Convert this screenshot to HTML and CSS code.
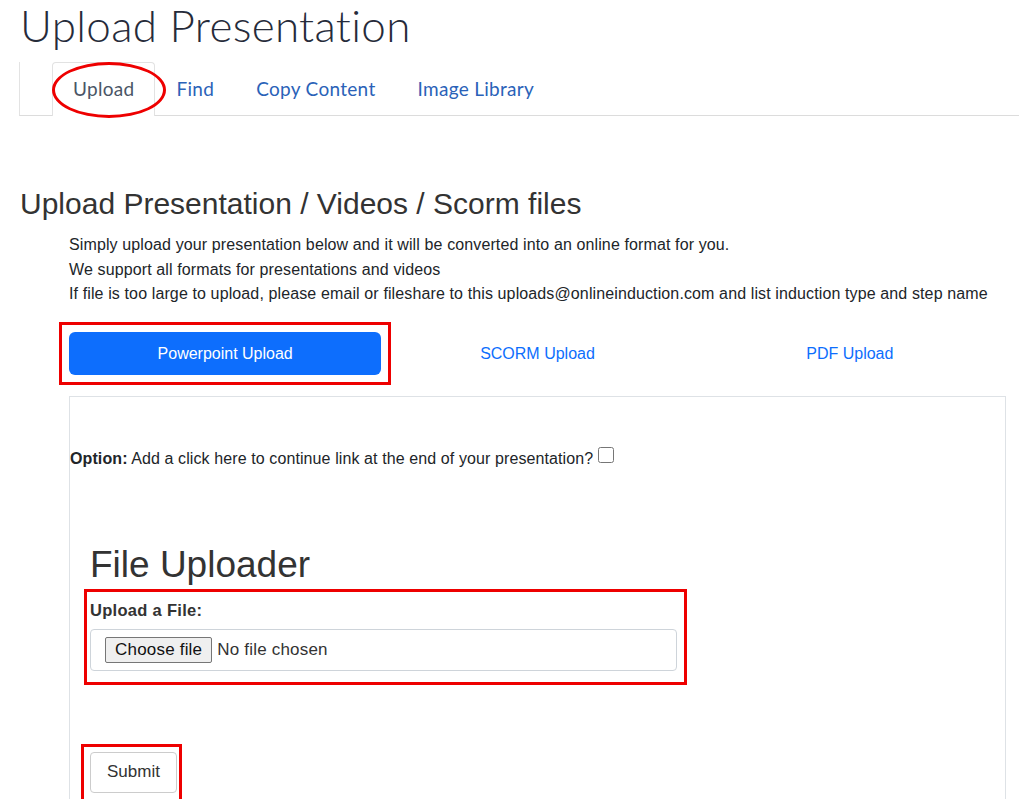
FILE: index.html
```html
<!DOCTYPE html>
<html lang="en">
<head>
  <meta charset="UTF-8" />
  <title>Upload Presentation</title>
  <meta name="viewport" content="width=device-width, initial-scale=1.0"/>
  <link rel="stylesheet" href="styles.css">
</head>
<body>
  <div class="page">
    <h1 class="page-title">Upload Presentation</h1>

    <ul class="nav-tabs">
      <li class="tab active">
        <a href="#">Upload</a>
        <span class="mark-ellipse"></span>
      </li>
      <li class="tab"><a href="#">Find</a></li>
      <li class="tab"><a href="#">Copy Content</a></li>
      <li class="tab"><a href="#">Image Library</a></li>
    </ul>

    <h3 class="section-title">Upload Presentation / Videos / Scorm files</h3>

    <div class="section-body">
      <p class="intro">Simply upload your presentation below and it will be converted into an online format for you.</p>
      <p class="intro">We support all formats for presentations and videos</p>
      <p class="intro">If file is too large to upload, please email or fileshare to this uploads@onlineinduction.com and list induction type and step name</p>

      <div class="pills">
        <div class="pill-wrap">
          <a href="#" class="pill active">Powerpoint Upload</a>
          <span class="mark-rect"></span>
        </div>
        <div class="pill-wrap"><a href="#" class="pill">SCORM Upload</a></div>
        <div class="pill-wrap"><a href="#" class="pill">PDF Upload</a></div>
      </div>

      <div class="upload-box">
        <p class="option"><b>Option:</b> Add a click here to continue link at the end of your presentation? <input type="checkbox" class="option-check"></p>

        <div class="uploader">
          <h1 class="uploader-title">File Uploader</h1>
          <div class="file-group">
            <label for="fileInput">Upload a File:</label>
            <div class="file-field">
              <span class="file-btn">Choose file</span>
              <span class="file-name">No file chosen</span>
            </div>
            <span class="mark-rect"></span>
          </div>

          <div class="submit-wrap">
            <button type="submit" class="submit-btn">Submit</button>
            <span class="mark-rect"></span>
          </div>
        </div>
      </div>
    </div>
  </div>
</body>
</html>
```

FILE: styles.css
```css
:root {
  --link: #2a62b8;
  --primary: #0d6efd;
  --border: #dee2e6;
  --mark: #ee0000;
}

body {
  margin: 0;
  font-family: "Liberation Sans", Arial, sans-serif;
  color: #212529;
  background: #fff;
  overflow: hidden;
}

.page {
  padding: 0 0 0 20px;
}

.page-title {
  margin: 0;
  font-family: Lato, "Open Sans", sans-serif;
  font-weight: 300;
  font-size: 44px;
  line-height: 50px;
  color: #262b3a;
  letter-spacing: 0.3px;
}

/* tabs */
.nav-tabs {
  list-style: none;
  margin: 12px 0 0 -1px;
  padding: 0 0 0 32px;
  display: flex;
  height: 53px;
  border-left: 1px solid #e3e3e3;
  border-bottom: 1px solid #dcdcdc;
}

.tab {
  position: relative;
  display: flex;
  align-items: center;
}

.tab a {
  display: block;
  padding: 0 20px;
  height: 53px;
  line-height: 51px;
  font-family: Lato, "Open Sans", sans-serif;
  font-size: 19px;
  letter-spacing: 0.3px;
  color: var(--link);
  text-decoration: none;
  border: 1px solid transparent;
  border-bottom: none;
  border-radius: 4px 4px 0 0;
  box-sizing: border-box;
}

.tab.active a {
  color: #4a5566;
  border-color: #e2e2e2;
  background: #fff;
  height: 54px;
  margin-bottom: -1px;
}

.mark-ellipse {
  position: absolute;
  left: 0;
  top: 0;
  width: 108px;
  height: 50px;
  border: 3px solid var(--mark);
  border-radius: 50%;
  pointer-events: none;
}

.section-title {
  margin: 70px 0 0;
  font-size: 30px;
  font-weight: 400;
  line-height: 36px;
  color: #333;
}

.section-body {
  margin-left: 49px;
  margin-right: 13px;
  padding-top: 11px;
}

.intro {
  margin: 0;
  font-size: 16px;
  letter-spacing: 0.12px;
  line-height: 24.5px;
}

/* pills */
.pills {
  display: grid;
  grid-template-columns: repeat(3, 1fr);
  margin-top: 25px;
}

.pill-wrap {
  position: relative;
}

.pill {
  display: block;
  height: 43px;
  line-height: 43px;
  text-align: center;
  font-size: 16px;
  color: var(--primary);
  text-decoration: none;
  border-radius: 6px;
}

.pill.active {
  background: var(--primary);
  color: #fff;
}

.pill-wrap .mark-rect {
  left: -10px;
  top: -10px;
  right: -10px;
  bottom: -10px;
}

.mark-rect {
  position: absolute;
  border: 3px solid var(--mark);
  pointer-events: none;
}

/* upload box */
.upload-box {
  margin-top: 21px;
  border: 1px solid var(--border);
  border-bottom: none;
  height: 420px;
}

.option {
  margin: 50px 0 0;
  font-size: 16px;
  letter-spacing: 0.1px;
  line-height: 20px;
}

.option b {
  font-weight: 700;
}

.option-check {
  width: 16px;
  height: 16px;
  margin: 0;
  vertical-align: 1px;
}

.uploader {
  padding: 0 20px;
}

.uploader-title {
  margin: 74px 0 0;
  font-size: 37px;
  font-weight: 400;
  line-height: 44px;
  color: #333;
}

.file-group {
  position: relative;
  width: 587px;
  margin-top: 12px;
}

.file-group label {
  display: block;
  font-weight: 700;
  font-size: 16.5px;
  letter-spacing: 0.3px;
  line-height: 22px;
  color: #333;
}

.file-group .mark-rect {
  left: -6px;
  top: -10px;
  right: -10px;
  bottom: -14px;
}

.file-field {
  margin-top: 8px;
  height: 42px;
  border: 1px solid #ced4da;
  border-radius: 4px;
  box-sizing: border-box;
  display: flex;
  align-items: center;
  padding-left: 14px;
  font-size: 17px;
  letter-spacing: 0.2px;
}

.file-btn {
  display: inline-block;
  padding: 2px 9px;
  background: #efefef;
  border: 1px solid #767676;
  border-radius: 2px;
  color: #111;
  line-height: 20px;
}

.file-name {
  margin-left: 5px;
  color: #333;
}

.submit-wrap {
  position: relative;
  display: inline-block;
  margin-top: 81px;
}

.submit-wrap .mark-rect {
  left: -9px;
  top: -8px;
  right: -5px;
  bottom: -10px;
}

.submit-btn {
  display: block;
  height: 41px;
  padding: 0 16px;
  font-family: "Liberation Sans", Arial, sans-serif;
  font-size: 17px;
  color: #333;
  background: #fff;
  border: 1px solid #ccc;
  border-radius: 4px;
}
```
